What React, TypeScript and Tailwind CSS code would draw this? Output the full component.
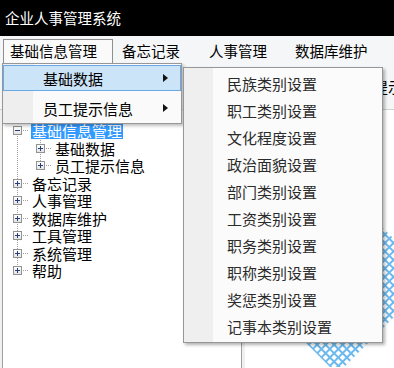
import React from 'react'

const submenuItems = [
  '民族类别设置',
  '职工类别设置',
  '文化程度设置',
  '政治面貌设置',
  '部门类别设置',
  '工资类别设置',
  '职务类别设置',
  '职称类别设置',
  '奖惩类别设置',
  '记事本类别设置',
]

type Node = { label: string; level: 0 | 1; expanded?: boolean; selected?: boolean }

const treeNodes: Node[] = [
  { label: '基础信息管理', level: 0, expanded: true, selected: true },
  { label: '基础数据', level: 1 },
  { label: '员工提示信息', level: 1 },
  { label: '备忘记录', level: 0 },
  { label: '人事管理', level: 0 },
  { label: '数据库维护', level: 0 },
  { label: '工具管理', level: 0 },
  { label: '系统管理', level: 0 },
  { label: '帮助', level: 0 },
]

function Expander({ open }: { open?: boolean }) {
  return (
    <div className="flex h-[9px] w-[9px] shrink-0 items-center justify-center border border-[#929292] bg-[linear-gradient(to_bottom,#ffffff,#e4e4e4)]">
      <svg width="7" height="7" viewBox="0 0 7 7">
        <line x1="1" y1="3.5" x2="6" y2="3.5" stroke="#253f7c" strokeWidth="1" />
        {!open && <line x1="3.5" y1="1" x2="3.5" y2="6" stroke="#253f7c" strokeWidth="1" />}
      </svg>
    </div>
  )
}

function Arrow() {
  return (
    <svg width="5" height="8" viewBox="0 0 5 8">
      <path d="M0 0 L5 4 L0 8 Z" fill="#111" />
    </svg>
  )
}

export default function App() {
  return (
    <div className="relative flex h-[368px] w-[394px] flex-col overflow-hidden bg-[#f0f0f0] font-['Noto_Sans_CJK_SC','Noto_Sans',sans-serif] text-black">
      {/* title */}
      <div className="flex h-[36px] shrink-0 items-center bg-black pl-[5px] text-[14.5px] leading-none text-white">
        企业人事管理系统
      </div>

      {/* menu strip */}
      <div className="flex h-[27px] shrink-0 items-start bg-[#f5f6f7] pt-[3px] text-[14.5px] leading-none">
        <div className="ml-[3px] flex h-[24px] w-[110px] items-center border border-b-0 border-[#8f8f8f] bg-[#fafafa] pl-[6px]">
          基础信息管理
        </div>
        <div className="flex h-[24px] w-[87px] items-center pl-[9px]">备忘记录</div>
        <div className="flex h-[24px] w-[86px] items-center pl-[9px]">人事管理</div>
        <div className="flex h-[24px] items-center pl-[9px]">数据库维护</div>
      </div>

      {/* toolbar, mostly under the menus */}
      <div className="flex h-[47px] shrink-0 items-center gap-[20px] border-b border-[#d2d2d2] bg-[#f5f6f7] pl-[263px] text-[15px] leading-none whitespace-nowrap">
        <span>基础数据</span>
        <span>员工提示信息</span>
      </div>

      {/* split area */}
      <div className="flex min-h-0 flex-1">
        <div className="relative ml-[2px] w-[240px] shrink-0 border-x border-[#a0a0a0] bg-white pt-[12px] text-[15px] leading-none">
          <svg className="absolute left-0 top-0" width="238" height="257">
            <line x1="14.5" y1="26" x2="14.5" y2="161" stroke="#a0a0a0" strokeDasharray="1 1" />
            <line x1="37.5" y1="30" x2="37.5" y2="56" stroke="#a0a0a0" strokeDasharray="1 1" />
          </svg>
          {treeNodes.map((n) => (
            <div key={n.label} className="relative flex h-[17.5px] items-center">
              <div className={n.level === 0 ? 'w-[10px] shrink-0' : 'w-[33px] shrink-0'} />
              <Expander open={n.expanded} />
              <div className="ml-[1px] w-[5px] shrink-0 border-t border-dotted border-[#a0a0a0]" />
              <div
                className={
                  n.selected
                    ? 'ml-[3px] flex h-[16px] items-center bg-[#3399ff] px-[1px] text-white'
                    : 'ml-[3px] flex h-[16px] items-center px-[1px]'
                }
              >
                {n.label}
              </div>
            </div>
          ))}
        </div>
        <div className="w-[3px] shrink-0 bg-[#f0f0f0]" />
        <div className="relative flex-1 overflow-hidden bg-white">
          <svg className="absolute left-0 top-0" width="149" height="257">
            <defs>
              <pattern id="lattice" width="6" height="6" patternUnits="userSpaceOnUse" patternTransform="rotate(45)">
                <rect x="0" y="0" width="6" height="2" fill="#6bb9ee" />
                <rect x="0" y="0" width="2" height="6" fill="#6bb9ee" />
              </pattern>
            </defs>
            <polygon points="92,72 188,168 92,264 -4,168" fill="url(#lattice)" />
          </svg>
        </div>
      </div>

      {/* first dropdown */}
      <div className="absolute left-[2px] top-[63px] w-[180px] border border-[#979797] bg-[linear-gradient(to_right,#eeeeee_0,#eeeeee_30px,#fafafa_30px)] pt-[1px] pb-[2px] text-[15px] leading-none shadow-[2px_2px_3px_rgba(0,0,0,0.25)]">
        <div className="flex h-[26px] items-center justify-between border border-[#69a9e8] bg-[#cce4f7] pl-[39px] pr-[12px]">
          <span>基础数据</span>
          <Arrow />
        </div>
        <div className="mt-[4px] flex h-[26px] items-center justify-between pl-[40px] pr-[13px]">
          <span>员工提示信息</span>
          <Arrow />
        </div>
      </div>

      {/* sub menu */}
      <div className="absolute left-[183px] top-[67px] w-[200px] border border-[#979797] bg-[linear-gradient(to_right,#efefef_0,#efefef_29px,#fbfbfb_29px)] py-[2px] text-[15px] leading-none text-[#2b2b2b] shadow-[2px_2px_3px_rgba(0,0,0,0.3)]">
        {submenuItems.map((s) => (
          <div key={s} className="flex h-[27px] items-center pl-[43px]">
            {s}
          </div>
        ))}
      </div>
    </div>
  )
}
